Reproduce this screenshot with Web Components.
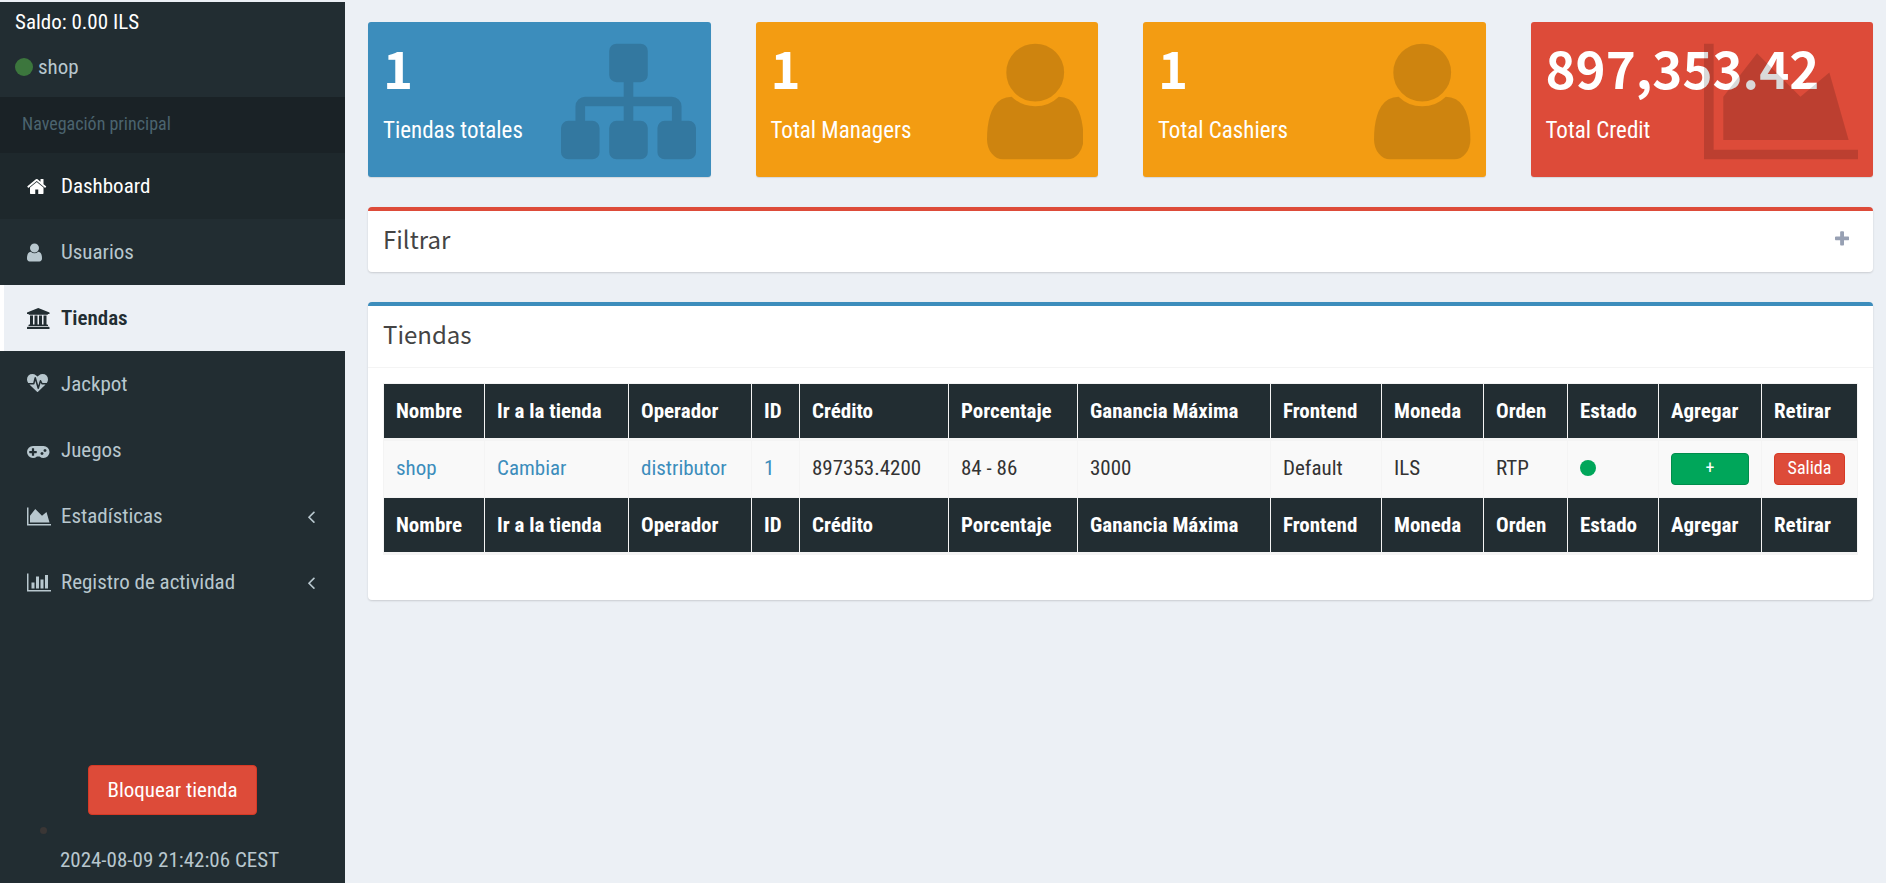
<!DOCTYPE html>
<html lang="es">
<head>
<meta charset="utf-8">
<meta name="viewport" content="width=device-width, initial-scale=1">
<title>Tiendas</title>
<style>
  body {
    margin: 0;
    background: #ecf0f5;
    color: #333;
    font: 21px/30px "Roboto Condensed", "Liberation Sans Narrow", Roboto, sans-serif;
    --title-font: "Source Sans Pro", "Noto Sans CJK SC", "Noto Sans", sans-serif;
  }
</style>
</head>
<body>
<admin-layout>
  <side-bar slot="side">
    <user-panel slot="top" balance="Saldo: 0.00 ILS" name="shop"></user-panel>
    <nav-item icon="home" state="active">Dashboard</nav-item>
    <nav-item icon="user">Usuarios</nav-item>
    <nav-item icon="bank" state="current">Tiendas</nav-item>
    <nav-item icon="heart">Jackpot</nav-item>
    <nav-item icon="gamepad">Juegos</nav-item>
    <nav-item icon="area" tree>Estadísticas</nav-item>
    <nav-item icon="bars" tree>Registro de actividad</nav-item>
    <side-footer slot="bottom">2024-08-09 21:42:06 CEST</side-footer>
  </side-bar>
  <stat-card icon="sitemap" color="#3c8dbc" value="1" slot="stats">Tiendas totales</stat-card>
  <stat-card icon="user" color="#f39c12" value="1" slot="stats">Total Managers</stat-card>
  <stat-card icon="user" color="#f39c12" value="1" slot="stats">Total Cashiers</stat-card>
  <stat-card icon="area" color="#dd4b39" value="897,353.42" slot="stats">Total Credit</stat-card>
  <content-box heading="Filtrar" accent="#dd4b39" collapsed></content-box>
  <content-box heading="Tiendas" accent="#3c8dbc"><store-table></store-table></content-box>
</admin-layout>

<script>
/* Each icon: [left edge, width, path] on a 1792-unit em. */
const ICONS = {
  home: [64, 1664, "M1472 992v480q0 26-19 45t-45 19h-384v-384h-256v384h-384q-26 0-45-19t-19-45v-480q0-1 .5-3t.5-3l575-474 575 474q1 2 1 6zm223-69l-62 74q-8 9-21 11h-3q-13 0-21-7l-692-577-692 577q-12 8-24 7-13-2-21-11l-62-74q-8-10-7-23.5t11-21.5l719-599q32-26 76-26t76 26l244 204v-195q0-14 9-23t23-9h192q14 0 23 9t9 23v408l219 182q10 8 11 21.5t-7 23.5z"],
  user: [256, 1280, "M1536 1399q0 109-62.5 187t-150.5 78h-854q-88 0-150.5-78t-62.5-187q0-85 8.5-160.5t31.5-152 58.5-131 94-89 134.5-34.5q131 128 313 128t313-128q76 0 134.5 34.5t94 89 58.5 131 31.5 152 8.5 160.5zm-256-887q0 159-112.5 271.5t-271.5 112.5-271.5-112.5-112.5-271.5 112.5-271.5 271.5-112.5 271.5 112.5 112.5 271.5z"],
  bank: [0, 1920, "M960 0l960 384v128h-128q0 26-20.5 45t-48.5 19h-1526q-28 0-48.5-19t-20.5-45h-128v-128zm-704 640h256v768h128v-768h256v768h128v-768h256v768h128v-768h256v768h59q28 0 48.5 19t20.5 45v64h-1664v-64q0-26 20.5-45t48.5-19h59v-768zm1595 960q28 0 48.5 19t20.5 45v128h-1920v-128q0-26 20.5-45t48.5-19h1782z"],
  heart: [0, 1792, "M1280 896h305q-5 6-10 10.5t-9 7.5l-3 4-623 600q-18 18-44 18t-44-18l-624-602q-5-2-21-20h369q22 0 39.5-13.5t22.5-34.5l70-281 190 667q6 20 23 33t39 13q21 0 38-13t23-33l146-485 56 112q18 35 57 35zm512-428q0 145-103 300h-369l-111-221q-8-17-25.5-27t-36.5-8q-45 5-56 46l-129 430-196-686q-6-20-23.5-33t-39.5-13-39 13.5-22 34.5l-116 464h-423q-103-155-103-300 0-220 127-344t351-124q62 0 126.5 21.5t120 58 95.5 68.5 76 68q36-36 76-68t95.5-68.5 120-58 126.5-21.5q224 0 351 124t127 344z"],
  gamepad: [0, 1920, "M832 1088v-128q0-14-9-23t-23-9h-192v-192q0-14-9-23t-23-9h-128q-14 0-23 9t-9 23v192h-192q-14 0-23 9t-9 23v128q0 14 9 23t23 9h192v192q0 14 9 23t23 9h128q14 0 23-9t9-23v-192h192q14 0 23-9t9-23zm576 64q0-53-37.5-90.5t-90.5-37.5-90.5 37.5-37.5 90.5 37.5 90.5 90.5 37.5 90.5-37.5 37.5-90.5zm256-256q0-53-37.5-90.5t-90.5-37.5-90.5 37.5-37.5 90.5 37.5 90.5 90.5 37.5 90.5-37.5 37.5-90.5zm256 128q0 212-150 362t-362 150q-192 0-338-128h-220q-146 128-338 128-212 0-362-150t-150-362 150-362 362-150h896q212 0 362 150t150 362z"],
  area: [0, 2048, "M2048 1536v128h-2048v-1536h128v1408h1920zm-384-1024l256 896h-1664v-576l448-576 576 576z"],
  bars: [0, 2048, "M640 896v512h-256v-512h256zm384-512v1024h-256v-1024h256zm1024 1152v128h-2048v-1536h128v1408h1920zm-640-896v768h-256v-768h256zm384-384v1152h-256v-1152h256z"],
  sitemap: [0, 1792, "M1792 1248v320q0 40-28 68t-68 28h-320q-40 0-68-28t-28-68v-320q0-40 28-68t68-28h96v-192h-512v192h96q40 0 68 28t28 68v320q0 40-28 68t-68 28h-320q-40 0-68-28t-28-68v-320q0-40 28-68t68-28h96v-192h-512v192h96q40 0 68 28t28 68v320q0 40-28 68t-68 28h-320q-40 0-68-28t-28-68v-320q0-40 28-68t68-28h96v-192q0-52 38-90t90-38h512v-192h-96q-40 0-68-28t-28-68v-320q0-40 28-68t68-28h320q40 0 68 28t28 68v320q0 40-28 68t-68 28h-96v192h512q52 0 90 38t38 90v192h96q40 0 68 28t28 68z"],
  angle: [45, 582, "M627 544q0 13-10 23l-393 393 393 393q10 10 10 23t-10 23l-50 50q-10 10-23 10t-23-10l-466-466q-10-10-10-23t10-23l466-466q10-10 23-10t23 10l50 50q10 10 10 23z"],
  plus: [192, 1408, "M1600 736v192q0 40-28 68t-68 28h-416v416q0 40-28 68t-68 28h-192q-40 0-68-28t-28-68v-416h-416q-40 0-68-28t-28-68v-192q0-40 28-68t68-28h416v-416q0-40 28-68t68-28h192q40 0 68 28t28 68v416h416q40 0 68 28t28 68z"]
};

const define = (name, render) => customElements.define(name, class extends HTMLElement {
  constructor() {
    super();
    this.attachShadow({ mode: "open" });
  }
  connectedCallback() {
    this.shadowRoot.innerHTML = render(this);
  }
});

define("fa-icon", el => {
  const [x, w, d] = ICONS[el.getAttribute("name")];
  return `<style>
    :host { display: block; height: 21px; }
    svg { display: block; height: 100%; fill: currentColor; }
  </style><svg viewBox="${x} 0 ${w} 1792" aria-hidden="true"><path d="${d}"/></svg>`;
});

define("admin-layout", () => `<style>
    :host { display: grid; grid-template-columns: 345px minmax(0, 1fr); min-height: 100vh; }
    aside { display: grid; padding-top: 2px; }
    main { display: flex; flex-direction: column; gap: 30px; padding: 22px 13px 22px 23px; }
    .stats { display: grid; grid-template-columns: repeat(4, minmax(0, 1fr)); gap: 45px; }
  </style>
  <aside><slot name="side"></slot></aside>
  <main><div class="stats"><slot name="stats"></slot></div><slot></slot></main>`);

define("side-bar", () => `<style>
    :host { display: flex; flex-direction: column; background: #222d32; color: #b8c7ce; }
    h2 { margin: 0; padding: 12px 22px 14px; background: #1a2226; color: #4b646f; font-size: 18px; font-weight: 400; }
    nav { display: flex; flex-direction: column; }
    .bottom { margin-top: auto; }
  </style>
  <slot name="top"></slot>
  <h2>Navegación principal</h2>
  <nav><slot></slot></nav>
  <div class="bottom"><slot name="bottom"></slot></div>`);

define("user-panel", el => `<style>
    :host { display: flex; flex-direction: column; gap: 15px; padding: 5px 15px 15px; }
    p { margin: 0; display: flex; align-items: center; gap: 5px; }
    .balance { color: #fff; }
    i { width: 18px; height: 18px; border-radius: 50%; background: #3c763d; }
  </style>
  <p class="balance">${el.getAttribute("balance")}</p>
  <p><i></i><span>${el.getAttribute("name")}</span></p>`);

define("nav-item", el => `<style>
    :host { display: block; }
    a { display: grid; grid-template-columns: 34px 1fr auto; align-items: center; padding: 18px 30px 18px 23px;
        border-left: 4px solid transparent; color: inherit; text-decoration: none; }
    :host([state=active]) a { background: #1e282c; border-left-color: #1e282c; color: #fff; }
    :host([state=current]) a { background: #ecf0f5; border-left-color: #fff; color: #222d32; font-weight: 600; }
  </style>
  <a href="#"><fa-icon name="${el.getAttribute("icon")}"></fa-icon><span><slot></slot></span>
  ${el.hasAttribute("tree") ? '<fa-icon name="angle"></fa-icon>' : ""}</a>`);

define("side-footer", () => `<style>
    :host { display: flex; flex-direction: column; align-items: center; padding-bottom: 8px; }
    button { font: inherit; color: #fff; background: #dd4b39; border: 1px solid #d73925; border-radius: 4px; padding: 9px 18px; }
    i { align-self: flex-start; width: 7px; height: 7px; margin: 12px 0 11px 40px; border-radius: 50%; background: #3a3635; }
    time { margin-right: 6px; }
  </style>
  <button type="button">Bloquear tienda</button><i></i><time><slot></slot></time>`);

define("stat-card", el => `<style>
    :host { display: block; position: relative; box-sizing: border-box; min-height: 155px; padding: 15px;
            border-radius: 3px; background: ${el.getAttribute("color")}; color: #fff; box-shadow: 0 1px 1px rgba(0,0,0,.1); }
    h3 { margin: 0 0 18px; font: 700 51px/60px var(--title-font); white-space: nowrap; }
    p { margin: 0; font-size: 23px; line-height: 32px; }
    fa-icon { position: absolute; top: 12px; right: 15px; height: 135px; color: rgba(0,0,0,.15); }
  </style>
  <h3>${el.getAttribute("value")}</h3><p><slot></slot></p>
  <fa-icon name="${el.getAttribute("icon")}"></fa-icon>`);

define("content-box", el => `<style>
    :host { display: block; background: #fff; border-top: 4px solid ${el.getAttribute("accent")};
            border-radius: 4px; box-shadow: 0 1px 2px rgba(0,0,0,.15); }
    header { display: flex; align-items: flex-start; justify-content: space-between; padding: 14px 15px 20px; }
    header.line { border-bottom: 1px solid #f4f4f4; }
    h3 { margin: 0; font: 400 24px/27px var(--title-font); color: #444; }
    button { border: 0; background: none; padding: 5px 9px 0; color: #97a0b3; }
    button fa-icon { height: 18px; }
    .body { padding: 15px 15px 45px; }
  </style>
  ${el.hasAttribute("collapsed")
    ? `<header><h3>${el.getAttribute("heading")}</h3><button type="button" aria-label="Expandir"><fa-icon name="plus"></fa-icon></button></header>`
    : `<header class="line"><h3>${el.getAttribute("heading")}</h3></header><div class="body"><slot></slot></div>`}`);

const COLUMNS = [["Nombre", 101], ["Ir a la tienda", 144], ["Operador", 123], ["ID", 48], ["Crédito", 149],
  ["Porcentaje", 129], ["Ganancia Máxima", 193], ["Frontend", 111], ["Moneda", 102], ["Orden", 84],
  ["Estado", 91], ["Agregar", 103], ["Retirar", 96]];
const CELLS = ['<a href="#">shop</a>', '<a href="#">Cambiar</a>', '<a href="#">distributor</a>', '<a href="#">1</a>',
  "897353.4200", "84 - 86", "3000", "Default", "ILS", "RTP", '<i role="img" aria-label="Activo"></i>',
  '<button type="button" class="add">+</button>', '<button type="button" class="out">Salida</button>'];

define("store-table", () => {
  const heads = COLUMNS.map(([t]) => `<th scope="col">${t}</th>`).join("");
  return `<style>
    :host { display: block; overflow-x: auto; }
    table { width: 100%; min-width: 1474px; table-layout: fixed; border-collapse: separate; border-spacing: 0;
            border: solid #f4f4f4; border-width: 1px 1px 3px 0; }
    th, td { padding: 12px 0 12px 12px; border-left: 1px solid #f4f4f4; text-align: left; white-space: nowrap; }
    th { background: #222d32; color: #fff; font-weight: 700; }
    td { height: 32px; padding: 11px 0 13px 12px; background: #f9f9f9; }
    tbody td { border-top: 3px solid #f4f4f4; border-bottom: 1px solid #f4f4f4; }
    td:nth-last-child(-n+2) { padding: 12px; }
    a { color: #3c8dbc; text-decoration: none; }
    i { display: block; width: 16px; height: 16px; border-radius: 50%; background: #00a65a; }
    button { display: block; width: 100%; font: 18px/26px "Roboto Condensed", "Liberation Sans Narrow", Roboto, sans-serif;
             color: #fff; border: 1px solid; border-radius: 4px; padding: 1px 0 3px; }
    .add { background: #00a65a; border-color: #008d4c; }
    .out { background: #dd4b39; border-color: #d73925; }
  </style>
  <table>
    <colgroup>${COLUMNS.map(([, w]) => `<col style="width:${w}px">`).join("")}</colgroup>
    <thead><tr>${heads}</tr></thead>
    <tbody><tr>${CELLS.map(c => `<td>${c}</td>`).join("")}</tr></tbody>
    <tfoot><tr>${heads}</tr></tfoot>
  </table>`;
});
</script>
</body>
</html>
